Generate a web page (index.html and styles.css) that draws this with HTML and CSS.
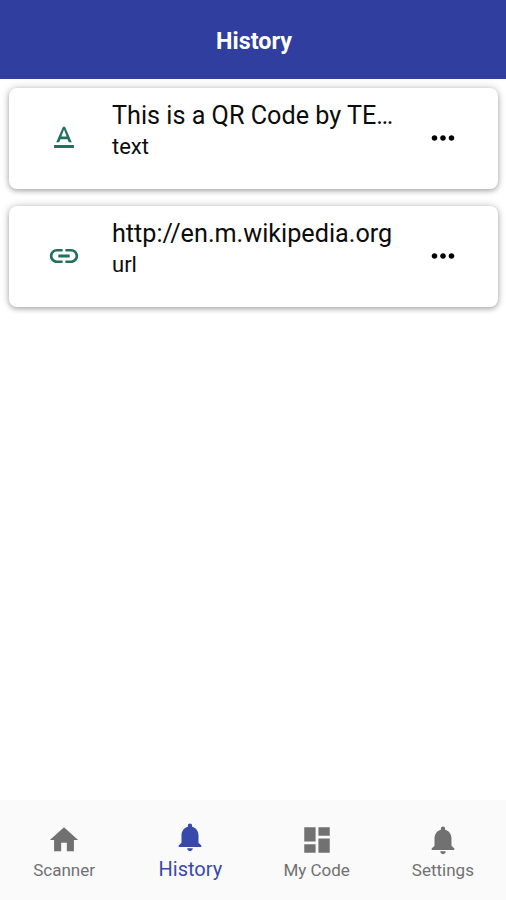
FILE: index.html
```html
<!DOCTYPE html>
<html lang="en">
<head>
<meta charset="utf-8">
<title>History</title>
<link rel="stylesheet" href="styles.css">
</head>
<body>
<header class="bar"><h1>History</h1></header>
<main class="list">
  <article class="card">
    <svg class="icon kind" viewBox="0 0 24 24"><path d="M5 17v2h14v-2H5zm4.5-4.2h5l.9 2.2h2.1L12.75 4h-1.5L6.500 15h2.1l.9-2.2zM12 5.980L13.870 11h-3.740L12 5.980z"/></svg>
    <div class="info"><div class="title">This is a QR Code by TE…</div><div class="type">text</div></div>
    <svg class="icon more" viewBox="0 0 24 24"><path d="M6 10c-1.1 0-2 .9-2 2s.9 2 2 2 2-.9 2-2-.9-2-2-2zm12 0c-1.1 0-2 .9-2 2s.9 2 2 2 2-.9 2-2-.9-2-2-2zm-6 0c-1.1 0-2 .9-2 2s.9 2 2 2 2-.9 2-2-.9-2-2-2z"/></svg>
  </article>
  <article class="card">
    <svg class="icon kind" viewBox="0 0 24 24"><path d="M3.900 12c0-1.710 1.390-3.100 3.100-3.100h4V7H7c-2.760 0-5 2.240-5 5s2.240 5 5 5h4v-1.900H7c-1.710 0-3.100-1.390-3.100-3.100zM8 13h8v-2H8v2zm9-6h-4v1.900h4c1.710 0 3.100 1.390 3.100 3.100s-1.390 3.100-3.100 3.100h-4V17h4c2.760 0 5-2.240 5-5s-2.240-5-5-5z"/></svg>
    <div class="info"><div class="title">http://en.m.wikipedia.org</div><div class="type">url</div></div>
    <svg class="icon more" viewBox="0 0 24 24"><path d="M6 10c-1.1 0-2 .9-2 2s.9 2 2 2 2-.9 2-2-.9-2-2-2zm12 0c-1.1 0-2 .9-2 2s.9 2 2 2 2-.9 2-2-.9-2-2-2zm-6 0c-1.1 0-2 .9-2 2s.9 2 2 2 2-.9 2-2-.9-2-2-2z"/></svg>
  </article>
</main>
<nav class="tabs">
  <a class="tab"><svg class="icon home" viewBox="0 0 24 24"><path d="M10 20v-6h4v6h5v-8h3L12 3 2 12h3v8z"/></svg><span>Scanner</span></a>
  <a class="tab active"><svg class="icon" viewBox="0 0 24 24"><path d="M12 22c1.100 0 2-.9 2-2h-4c0 1.100.89 2 2 2zm6-6v-5c0-3.070-1.640-5.640-4.500-6.320V4c0-.83-.67-1.500-1.500-1.500s-1.500.67-1.500 1.500v.68C7.630 5.360 6 7.920 6 11v5l-2 2v1h16v-1l-2-2z"/></svg><span>History</span></a>
  <a class="tab"><svg class="icon" viewBox="0 0 24 24"><path d="M3 13h8V3H3v10zm0 8h8v-6H3v6zm10 0h8V11h-8v10zm0-18v6h8V3h-8z"/></svg><span>My Code</span></a>
  <a class="tab"><svg class="icon" viewBox="0 0 24 24"><path d="M12 22c1.100 0 2-.9 2-2h-4c0 1.100.89 2 2 2zm6-6v-5c0-3.070-1.640-5.640-4.500-6.320V4c0-.83-.67-1.500-1.500-1.500s-1.500.67-1.500 1.500v.68C7.630 5.360 6 7.920 6 11v5l-2 2v1h16v-1l-2-2z"/></svg><span>Settings</span></a>
</nav>
</body>
</html>
```
FILE: styles.css
```css
* { box-sizing: border-box; }
body {
  margin: 0;
  height: 900px;
  display: flex;
  flex-direction: column;
  overflow: hidden;
  background: #fff;
  color: #0c0c0c;
  font-family: Roboto, "Liberation Sans", sans-serif;
}
.bar {
  height: 79px;
  flex: none;
  display: flex;
  align-items: center;
  justify-content: center;
  padding: 3px 0 0 2px;
  background: #303f9f;
  color: #fff;
}
.bar h1 { margin: 0; font-size: 23.3px; line-height: 28px; font-weight: 700; }
.list {
  flex: 1;
  display: flex;
  flex-direction: column;
  gap: 17px;
  padding: 9px 8px 0 9px;
}
.card {
  height: 101px;
  display: grid;
  grid-template-columns: 110px 282px 1fr;
  align-items: center;
  padding: 0 13px 1px 0;
  border-radius: 8px;
  background: #fff;
  box-shadow: 0 2px 5px rgba(0, 0, 0, .24), 0 0 9px rgba(0, 0, 0, .2);
}
.icon { display: block; width: 34px; height: 34px; fill: currentColor; }
.kind { justify-self: center; color: #23705f; }
.more { justify-self: center; color: #000; }
.info { align-self: start; margin: 12px 0 0 -7px; width: 290px; }
.title {
  font-size: 25.2px;
  line-height: 32px;
  white-space: nowrap;
}
.type { font-size: 22px; line-height: 30px; }
.tabs {
  height: 100px;
  flex: none;
  display: grid;
  grid-template-columns: repeat(4, 1fr);
  padding-left: 1px;
  background: #fafafa;
  color: #717171;
}
.tab {
  display: flex;
  flex-direction: column;
  align-items: center;
  padding-top: 23px;
  font-size: 17px;
}
.tab span { line-height: 24px; margin-top: 1px; white-space: nowrap; }
.tab.active { padding-top: 20px; color: #3949ab; font-size: 20px; }
.tab.active span { margin-top: 3px; }
```
